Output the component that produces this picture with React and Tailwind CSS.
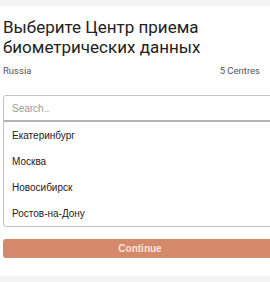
export default function App() {
  const items = ["Екатеринбург", "Москва", "Новосибирск", "Ростов-на-Дону"];
  return (
    <div className="w-[270px] h-[282px] overflow-hidden bg-[#f3f3f4] pt-[6px]">
      <div className="h-[270px] bg-white pl-[3px] pt-[11px]" style={{ fontFamily: "Roboto, sans-serif" }}>
        <div className="w-[274px]">
          <h1 className="text-[17px] leading-[20px] text-[#222] font-normal m-0">
            Выберите Центр приема<br />биометрических данных
          </h1>
          <div className="mt-[7px] flex justify-between pr-[17px] text-[9.5px] leading-[14px] text-[#555]">
            <span>Russia</span>
            <span>5 Centres</span>
          </div>
          <div className="mt-[17px] border border-[#c2c2c2] rounded-[3px] overflow-hidden" style={{ fontFamily: "'Liberation Sans', Arial, sans-serif" }}>
            <div className="h-[26px] border-b-2 border-[#b4b4b4] flex items-center px-[8px] text-[10px] text-[#9a9a9a]">
              Search..
            </div>
            {items.map((t) => (
              <div key={t} className="h-[26px] flex items-center px-[8px] text-[10px] text-[#222]">
                {t}
              </div>
            ))}
          </div>
          <button className="mt-[12px] w-full h-[19px] rounded-[3px] bg-[#d4896a] text-[#fbe4d9] text-[10px] font-bold flex items-center justify-center" style={{ fontFamily: "'Liberation Sans', Arial, sans-serif" }}>
            Continue
          </button>
        </div>
      </div>
    </div>
  );
}
